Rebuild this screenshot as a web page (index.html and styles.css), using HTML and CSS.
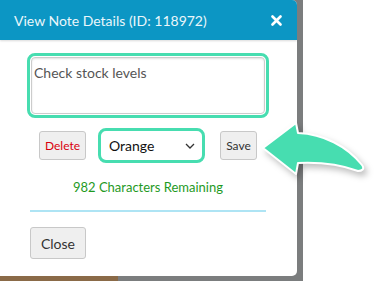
FILE: index.html
```html
<!DOCTYPE html>
<html lang="en">
<head>
  <meta charset="UTF-8">
  <title>View Note Details</title>
  <link rel="stylesheet" href="styles.css">
</head>
<body>
  <div class="page">
    <!-- Backdrop column behind the dialog -->
    <div class="backdrop">
      <div class="modal">
        <div class="modal-header">
          <span class="modal-title">View Note Details (ID: 118972)</span>
          <svg class="modal-close" width="11" height="11" viewBox="0 0 11 11"><path d="M1.5 1.5 L9.5 9.5 M9.5 1.5 L1.5 9.5" stroke="#fff" stroke-width="2.6" stroke-linecap="round"/></svg>
        </div>

        <div class="modal-body">
          <div class="highlight note-box">
            <div class="note-input">Check stock levels</div>
          </div>

          <div class="note-actions">
            <button class="btn btn-delete">Delete</button>
            <div class="highlight select-box">
              <div class="color-select">
                <span>Orange</span>
                <svg width="10" height="6" viewBox="0 0 10 6"><path d="M1 1 L5 5 L9 1" fill="none" stroke="#333" stroke-width="1.3"/></svg>
              </div>
            </div>
            <button class="btn btn-save">Save</button>
          </div>

          <div class="chars-left">982 Characters Remaining</div>
          <div class="divider"></div>
          <button class="btn btn-close">Close</button>
        </div>
      </div>
      <div class="backdrop-bottom">
        <div class="brown-bar"></div>
      </div>
    </div>

    <!-- Pointer arrow over the Save button -->
    <svg class="pointer-arrow" width="110" height="75" viewBox="0 0 110 75">
      <path d="M2 26 L35 1 L37 11 C62 12 86 24 101 43 C104 47 101 49 97 49 C78 42 58 40 37 41 L35 52 Z"
            fill="#47ddb0" stroke="#fff" stroke-width="2" stroke-linejoin="round"/>
    </svg>
  </div>
</body>
</html>
```

FILE: styles.css
```css
* {
  margin: 0;
  padding: 0;
  box-sizing: border-box;
  font-family: Lato, "Open Sans", sans-serif;
}

body {
  background-color: white;
}

.page {
  position: relative;
  width: 379px;
  height: 281px;
  overflow: hidden;
}

.backdrop {
  width: 303px;
  height: 281px;
  background-color: #7b7d7e;
  display: flex;
  flex-direction: column;
}

.modal {
  width: 297px;
  height: 276px;
  background-color: white;
  border-radius: 0 5px 5px 0;
  overflow: hidden;
}

.modal-header {
  height: 40px;
  background-color: #0c96c4;
  color: #eaf6fb;
  display: flex;
  align-items: center;
  justify-content: space-between;
  padding: 0 15px 0 14px;
  box-shadow: 0 1px 2px rgba(0, 0, 0, 0.15);
}

.modal-title {
  font-size: 14px;
}

.modal-body {
  padding: 13px 31px 0 30px;
}

.highlight {
  border: 3px solid #47ddb0;
  border-radius: 8px;
  padding: 1px;
}

.note-box {
  margin: 0 -3px;
  height: 65px;
}

.note-input {
  height: 100%;
  border: 1px solid #ccc;
  border-radius: 4px;
  box-shadow: inset 0 1px 2px rgba(0, 0, 0, 0.12);
  padding: 6px 2px;
  font-size: 14px;
  color: #555;
}

.note-actions {
  display: flex;
  align-items: center;
  justify-content: center;
  margin-top: 10px;
}

.btn {
  background-color: #efefef;
  border: 1px solid #c8c8c8;
  border-radius: 3px;
  font-family: Lato, sans-serif;
  color: #333;
  cursor: pointer;
}

.btn-delete {
  width: 47px;
  height: 29px;
  font-size: 12px;
  color: #d9000d;
}

.select-box {
  width: 107px;
  height: 35px;
  margin: 0 15px 0 12px;
}

.color-select {
  height: 100%;
  border-radius: 4px;
  display: flex;
  align-items: center;
  justify-content: space-between;
  padding: 0 6px 0 7px;
  font-size: 14px;
  color: #111;
}

.btn-save {
  width: 37px;
  height: 29px;
  font-size: 12px;
}

.chars-left {
  margin-top: 16px;
  text-align: center;
  font-size: 13px;
  color: #1f9a1f;
}

.divider {
  margin-top: 15px;
  height: 2px;
  background-color: #aee4f4;
}

.btn-close {
  margin-top: 15px;
  width: 56px;
  height: 32px;
  font-size: 14px;
}

.backdrop-bottom {
  flex: 1;
  display: flex;
}

.brown-bar {
  width: 118px;
  background-color: #8a6a48;
}

.pointer-arrow {
  position: absolute;
  left: 261px;
  top: 122px;
  filter: drop-shadow(3px 4px 3px rgba(0, 0, 0, 0.25));
}
```
